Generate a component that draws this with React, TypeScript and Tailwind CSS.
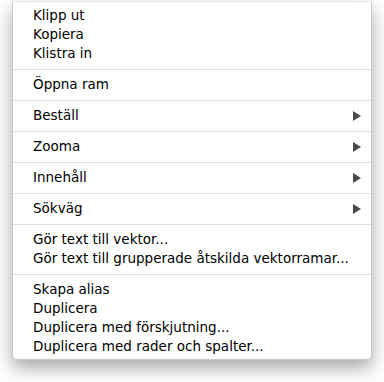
const groups: { label: string; sub?: boolean }[][] = [
  [{ label: "Klipp ut" }, { label: "Kopiera" }, { label: "Klistra in" }],
  [{ label: "Öppna ram" }],
  [{ label: "Beställ", sub: true }],
  [{ label: "Zooma", sub: true }],
  [{ label: "Innehåll", sub: true }],
  [{ label: "Sökväg", sub: true }],
  [{ label: "Gör text till vektor..." }, { label: "Gör text till grupperade åtskilda vektorramar..." }],
  [
    { label: "Skapa alias" },
    { label: "Duplicera" },
    { label: "Duplicera med förskjutning..." },
    { label: "Duplicera med rader och spalter..." },
  ],
]

export default function App() {
  return (
    <div className="w-[384px] h-[382px] bg-white pt-px pl-3">
      {/* Context menu */}
      <div className="w-[360px] bg-white border border-[#c8c8c8] border-t-[#e4e4e4] rounded-b-[5px] rounded-t-[2px] shadow-[0_8px_18px_rgba(0,0,0,0.35)] font-['DejaVu_Sans',sans-serif] text-[13.5px] text-black">
        {groups.map((group, gi) => (
          <div key={gi} className={`${gi === 0 ? "pt-[4px]" : "pt-[5px] border-t border-[#e0e0e0]"} ${gi === groups.length - 1 ? "pb-[3px]" : "pb-[6px]"}`}>
            {group.map((item, ii) => (
              <div key={ii} className="flex items-center h-[19px] pl-5 pr-[10px]">
                <span className="flex-1 whitespace-nowrap">{item.label}</span>
                {item.sub && (
                  <svg width="8" height="10" viewBox="0 0 8 10" className="mt-px">
                    <path d="M0 0 L8 5 L0 10 Z" fill="#4a4a4a" />
                  </svg>
                )}
              </div>
            ))}
          </div>
        ))}
      </div>
    </div>
  )
}
